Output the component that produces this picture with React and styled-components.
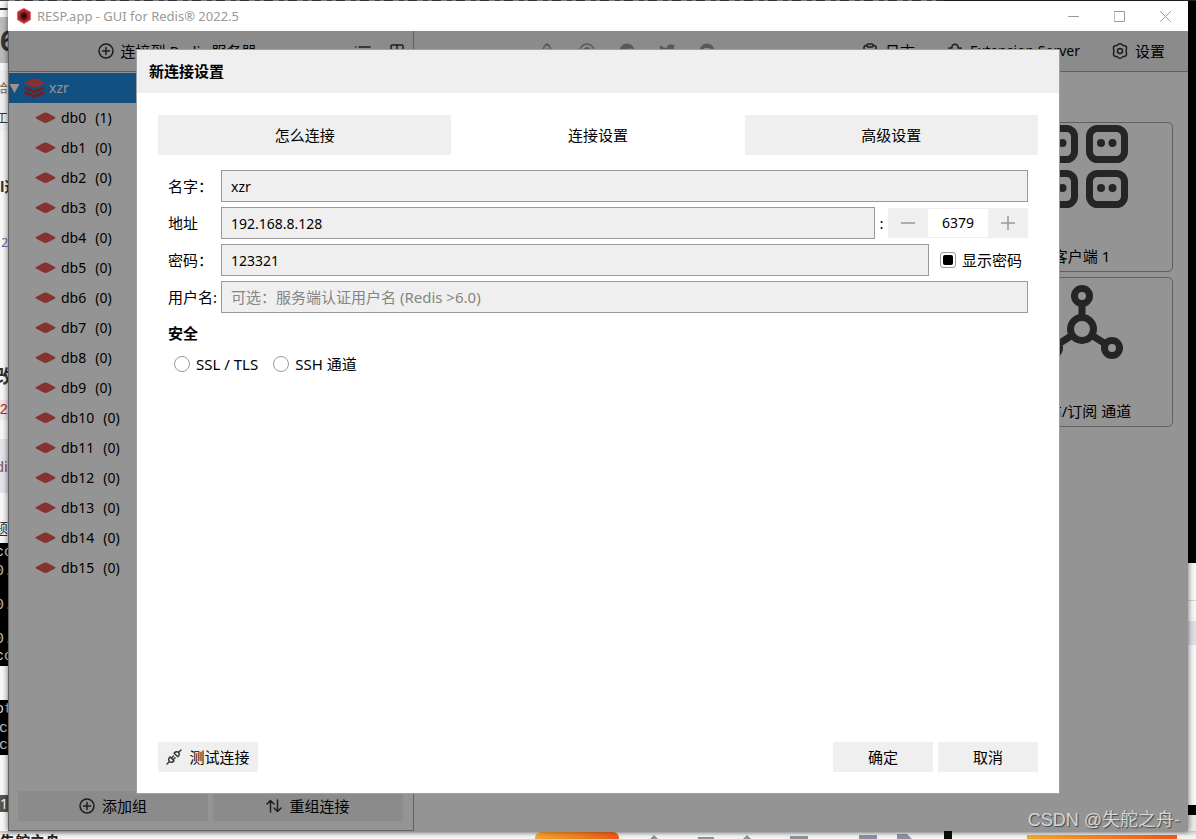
import React, { useState } from 'react';
import styled, { createGlobalStyle } from 'styled-components';

const GlobalStyle = createGlobalStyle`
  *, *::before, *::after { box-sizing: border-box; }
  body {
    margin: 0;
    overflow: hidden;
    background: #fbfbfb;
    color: #000;
    font: 15px/20px "Noto Sans", "Noto Sans CJK SC", sans-serif;
  }
  button, input { font: inherit; color: inherit; margin: 0; }
  button { border: 0; padding: 0; cursor: pointer; }
`;

/* ---------- desktop behind the window ---------- */
const Desktop = styled.div`
  display: grid;
  grid-template: 1px minmax(0, 1fr) 8px / 8px minmax(0, 1fr) 8px;
  height: 100vh;
  overflow: hidden;
  position: relative;
`;
const TopStrip = styled.div`
  grid-column: 1 / -1;
  display: flex;
  background: repeating-linear-gradient(90deg, #45454f 0 9px, #aaa 9px 15px, #55555f 15px 20px, #aaa 20px 24px);
  &::after { content: ''; width: 252px; margin-left: auto; background: #262626; }
`;
const SideStrip = styled.div`
  display: flex;
  flex-direction: column;
  overflow: hidden;
`;
const Patch = styled.div`
  flex: 0 0 ${p => p.$h}px;
  display: flex;
  align-items: center;
  justify-content: ${p => p.$align || 'flex-end'};
  overflow: hidden;
  white-space: nowrap;
  background: ${p => p.$bg || '#f8f8f8'};
  color: ${p => p.$fg || '#333'};
  font-family: ${p => (p.$mono ? '"Liberation Mono", monospace' : 'inherit')};
  font-size: ${p => p.$size || 15}px;
  font-weight: ${p => (p.$bold ? 700 : 400)};
`;
const BottomStrip = styled.div`
  grid-column: 1 / -1;
  display: flex;
  align-items: flex-start;
  overflow: hidden;
  background: linear-gradient(#c4c4c4, #f3f3f3 5px);
`;
const BottomText = styled.span`
  flex: 0 0 61px;
  font-size: 15px;
  font-weight: 700;
  color: #222;
  white-space: nowrap;
`;
const BottomArt = styled.svg`
  display: block;
  flex: 0 0 661px;
  margin-left: auto;
  height: 8px;
`;
const Watermark = styled.div`
  position: absolute;
  right: 16px;
  bottom: 6px;
  color: #d6d6d6;
  font: 18px/26px "Liberation Sans", "Noto Sans CJK SC", sans-serif;
  text-shadow: 1px 1px 1px #444;
`;

/* ---------- application window ---------- */
const Window = styled.main`
  position: relative;
  display: flex;
  flex-direction: column;
  min-width: 0;
  background: #fff;
  box-shadow: 0 0 6px rgba(0, 0, 0, 0.6);
`;
const TitleBar = styled.header`
  display: flex;
  align-items: center;
  flex: 0 0 30px;
  padding-left: 8px;
  gap: 5px;
  color: #999;
  font-size: 13px;
`;
const Caption = styled.span`flex: 1;`;
const WindowControls = styled.div`display: flex;`;
const WindowButton = styled.button`
  display: grid;
  place-items: center;
  width: 46px;
  height: 30px;
  background: none;
`;
const Workspace = styled.div`
  flex: 1;
  min-height: 0;
  display: grid;
  grid-template-columns: 406px minmax(0, 1fr);
`;
const Sidebar = styled.aside`
  display: flex;
  flex-direction: column;
  border: 1px solid #a5a5a5;
  border-top: 0;
`;
const ToolBar = styled.div`
  display: flex;
  align-items: center;
  flex: 0 0 41px;
  background: #f0f0f0;
  border-bottom: 1px solid #a5a5a5;
`;
const ToolButton = styled.button`
  display: flex;
  align-items: center;
  justify-content: center;
  gap: 7px;
  height: 40px;
  background: #f0f0f0;
  white-space: nowrap;
  flex: ${p => (p.$grow ? 1 : '0 0 auto')};
  padding: 0 ${p => p.$pad || 0}px;
  font-size: ${p => (p.$latin ? 14 : 15)}px;
`;
const Socials = styled.nav`
  display: flex;
  gap: 24px;
  margin-left: 125px;
`;
const Social = styled.a`
  display: flex;
  color: #999;
`;
const Actions = styled.div`
  display: flex;
  gap: 32px;
  margin-left: auto;
  padding-right: 23px;
`;
const Tree = styled.ul`
  flex: 1;
  list-style: none;
  margin: 1px 0 0;
  padding: 0;
  font-size: 14px;
`;
const ServerRow = styled.li`
  display: flex;
  align-items: center;
  height: 30px;
  gap: 4px;
  background: #228ae0;
  color: #fff;
`;
const DbRow = styled.li`
  display: flex;
  align-items: center;
  height: 30px;
  gap: 5px;
  padding-left: 26px;
`;
const Count = styled.span`margin-left: 4px;`;
const SidebarFooter = styled.div`
  display: grid;
  grid-template-columns: 1fr 1fr;
  gap: 5px;
  padding: 0 10px 9px 9px;
`;
const FooterButton = styled(ToolButton)`height: 30px;`;
const Content = styled.section`
  display: flex;
  flex-direction: column;
  min-width: 0;
`;
const Cards = styled.div`
  display: grid;
  grid-template-columns: repeat(4, minmax(0, 1fr));
  gap: 5px;
  padding: 50px 15px 0 12px;
`;
const Card = styled.article`
  grid-column: 4;
  height: 150px;
  display: flex;
  flex-direction: column;
  align-items: center;
  justify-content: space-between;
  padding: 2px 0 5px;
  border: 1px solid #a5a5a5;
  border-radius: 5px;
`;

/* ---------- dialog ---------- */
const Overlay = styled.div`
  position: absolute;
  inset: 30px 0 0;
  display: flex;
  padding: 19px 129px 38px;
  background: rgba(0, 0, 0, 0.42);
`;
const Dialog = styled.form`
  flex: 1;
  display: flex;
  flex-direction: column;
  background: #fff;
  outline: 1px solid #a0a0a0;
`;
const DialogTitle = styled.h1`
  margin: 0;
  padding: 11px 12px 12px;
  background: #efefef;
  font-size: 15px;
  line-height: 20px;
`;
const DialogBody = styled.div`
  flex: 1;
  display: flex;
  flex-direction: column;
  padding: 22px 21px 21px;
`;
const Tabs = styled.div`
  display: grid;
  grid-template-columns: repeat(3, 1fr);
`;
const Tab = styled.button`
  height: 40px;
  background: ${p => (p.$active ? '#fff' : '#efefef')};
`;
const Fields = styled.div`
  display: flex;
  flex-direction: column;
  gap: 5px;
  padding: 15px 10px 0;
`;
const Field = styled.div`
  display: flex;
  align-items: center;
  height: 32px;
`;
const Label = styled.label`
  flex: 0 0 53px;
  white-space: nowrap;
`;
const TextInput = styled.input`
  flex: 1;
  min-width: 0;
  height: 32px;
  padding: 0 9px;
  border: 1px solid #999;
  border-radius: 0;
  background: #efefef;
  font-size: 14px;
  outline: 0;
  &::placeholder { color: #858585; opacity: 1; font-size: 15px; }
`;
const Colon = styled.span`
  flex: 0 0 13px;
  text-align: center;
`;
const Stepper = styled.div`
  flex: 0 0 140px;
  display: grid;
  grid-template-columns: 40px 1fr 40px;
  height: 30px;
  border: solid #efefef;
  border-width: 1px 0;
`;
const StepButton = styled.button`
  display: grid;
  place-items: center;
  background: #efefef;
`;
const PortInput = styled.input`
  width: 100%;
  min-width: 0;
  border: 0;
  padding: 0;
  background: #fff;
  text-align: center;
  font-size: 14px;
  outline: 0;
`;
const Choice = styled.label`
  display: flex;
  align-items: center;
  gap: 6px;
  white-space: nowrap;
`;
const ShowPassword = styled(Choice)`
  flex: 0 0 99px;
  padding-left: 11px;
`;
const Check = styled.input`
  appearance: none;
  width: 16px;
  height: 16px;
  display: grid;
  place-items: center;
  border: 1px solid #999;
  border-radius: 3px;
  background: #fff;
  &:checked::before { content: ''; width: 10px; height: 10px; border-radius: 2px; background: #000; }
`;
const Radio = styled(Check)`
  border-radius: 50%;
  &:checked::before { border-radius: 50%; }
`;
const SectionTitle = styled.h2`
  margin: 5px 0 6px;
  font-size: 15px;
  line-height: 20px;
`;
const Choices = styled.div`
  display: flex;
  gap: 15px;
  padding-left: 6px;
`;
const DialogFooter = styled.footer`
  display: flex;
  gap: 5px;
  margin-top: auto;
`;
const DialogButton = styled.button`
  display: flex;
  align-items: center;
  justify-content: center;
  gap: 7px;
  width: 100px;
  height: 30px;
  background: #efefef;
  margin-right: ${p => (p.$lead ? 'auto' : 0)};
`;

/* ---------- icons ---------- */
const Icon = ({ size = 16, w, h, box = '0 0 16 16', sw = 1.5, color = '#333', children }) => (
  <svg width={w || size} height={h || size} viewBox={box} fill="none" stroke={color} strokeWidth={sw} strokeLinecap="round" strokeLinejoin="round" aria-hidden="true">
    {children}
  </svg>
);
const PlusCircle = () => <Icon><circle cx="8" cy="8" r="7" /><path d="M4.5 8h7M8 4.5v7" /></Icon>;
const AppLogo = () => (
  <Icon box="0 0 16 18" w={16} h={16}>
    <path d="M8 .5 15.2 4.6v8.6L8 17.5.8 13.2V4.6Z" fill="#b5272d" stroke="#cf4a49" strokeWidth=".8" />
    <path d="M8 4 12 6.5v5L8 14 4 11.5v-5Z" fill="#5c0f14" stroke="none" />
    <circle cx="8" cy="9" r="2" fill="#210507" stroke="none" />
  </Icon>
);
const ServerIcon = () => (
  <Icon w={21} h={20} box="0 0 21 20" sw={3}>
    <path d="M8.5.8q2-.8 4 0L20 4.2q1 .8 0 1.500L12.500 9.200q-2 .8-4 0L1 5.700q-1-.7 0-1.500Z" fill="#e55653" stroke="none" />
    <path d="m1.8 10 6.700 3q2 .8 4 0l6.700-3M1.800 14.800l6.700 3q2 .8 4 0l6.700-3" stroke="#bb3b3e" />
  </Icon>
);
const DbIcon = () => (
  <Icon w={21} h={12} box="0 0 21 12"><path d="M8.5.9q2-.8 4 0L20 5q1 .8 0 1.500l-7.500 4q-2 .8-4 0L1 6.500q-1-.7 0-1.500Z" fill="#e55653" stroke="none" /></Icon>
);
const ClientIcon = () => (
  <Icon w={92} h={84} box="0 0 92 84" sw={7}>
    <g stroke="#404040">
      {[[0, 0], [50, 0], [0, 45], [50, 45]].map(([x, y]) => (
        <g key={`${x}-${y}`} transform={`translate(${x} ${y})`}>
          <rect x="3.5" y="3.5" width="35" height="31" rx="8" />
          <g fill="#404040" stroke="none"><circle cx="15" cy="18" r="4" /><circle cx="26.5" cy="18" r="4" /></g>
        </g>
      ))}
    </g>
  </Icon>
);
const ChannelIcon = () => (
  <Icon w={84} h={84} box="0 0 84 84" sw={7}>
    <g stroke="#404040">
      <circle cx="42" cy="49" r="11.5" /><circle cx="42" cy="16" r="7.5" />
      <circle cx="12" cy="68" r="7.5" /><circle cx="72" cy="68" r="7.5" />
      <path d="M42 25v10M31 56l-11 7M53 56l11 7" strokeLinecap="butt" />
    </g>
  </Icon>
);
const Plug = () => (
  <Icon sw={1.4}>
    <path d="m1 15 2.5-2.5M12.5 3.5 15 1M3.5 12.5c-1.3-1.6-1-3.2.7-4.6L8 11.7c-1.4 1.7-3 2.1-4.5.8ZM8.100 4.300c1.300-1.700 3-2.100 4.400-.8 1.300 1.500 1 3-.7 4.300ZM6 8.600l1.500-1.500M7.600 10.200l1.500-1.500" />
  </Icon>
);

const leftPatches = [
  [16, '#f8f8f8', '一', { $bold: true }], [46, '#bcbcbc', '6', { $size: 28, $bold: true, $align: 'flex-start' }], [7, '#f8f8f8'],
  [37, '#f1f1f1', '给', { $fg: '#765', $size: 12 }], [24, '#f1f1f1', '工', { $size: 12 }], [38, '#f8f8f8'],
  [34, '#f8f8f8', 'l道', { $bold: true, $align: 'flex-start' }],
  [26, '#f8f8f8'], [28, '#f8f8f8', '2', { $fg: '#66a', $size: 12 }], [108, '#f8f8f8'], [22, '#f8f8f8', '改', { $size: 18, $bold: true, $align: 'center' }],
  [13, '#f8f8f8'], [20, '#f3e7e9', '12', { $fg: '#b22', $mono: true, $size: 14 }], [19, '#f8f8f8'],
  [54, '#e4e4ea', 'di', { $fg: '#8a5055' }], [24, '#f8f8f8'], [22, '#f8f8f8', '题'], [4, '#f8f8f8'],
  [20, '#000', 'co', { $mono: true, $fg: '#ccc', $align: 'center' }], [17, '#000', '0.', { $mono: true, $fg: '#bbb', $align: 'center' }], [17, '#000'],
  [17, '#000', '0.', { $mono: true, $fg: '#bbb', $align: 'center' }], [17, '#000'], [17, '#000', '0.', { $mono: true, $fg: '#bbb', $align: 'center' }],
  [18, '#000', 'co', { $mono: true, $fg: '#ccc', $align: 'center' }], [34, '#f8f8f8'],
  [20, '#000', 'ot', { $mono: true, $fg: '#ccc', $align: 'center' }], [17, '#000', '.c', { $mono: true, $fg: '#bbb' }], [18, '#000', 'c', { $mono: true, $fg: '#bbb' }],
  [40, '#f8f8f8'], [17, '#555', '1', { $fg: '#fff', $size: 14 }], [19, '#f8f8f8'],
];
const rightPatches = [[562, '#000'], [37, '#f7f7f7'], [1, '#d5d5da'], [20, '#f7f7f7'], [24, '#dfdfe6'], [160, '#f7f7f7'], [10, '#000'], [17, '#e8e8e8']];
const databases = Array.from({ length: 16 }, (_, i) => ({ name: `db${i}`, keys: i === 0 ? 1 : 0 }));
const tabNames = ['怎么连接', '连接设置', '高级设置'];

export default function App() {
  const [tab, setTab] = useState(1);
  const [port, setPort] = useState(6379);
  const [visible, setVisible] = useState(true);

  return (
    <>
      <GlobalStyle />
      <Desktop>
        <TopStrip />
        <SideStrip aria-hidden="true">
          {leftPatches.map(([h, bg, text, style], i) => <Patch key={i} $h={h} $bg={bg} {...style}>{text}</Patch>)}
        </SideStrip>

        <Window>
          <TitleBar>
            <AppLogo />
            <Caption>RESP.app - GUI for Redis® 2022.5</Caption>
            <WindowControls>
              <WindowButton aria-label="最小化"><Icon color="#999" size={11} box="0 0 11 11" sw={1}><path d="M.5 5.5h10" /></Icon></WindowButton>
              <WindowButton aria-label="最大化"><Icon color="#999" size={11} box="0 0 11 11" sw={1}><path d="M.5.5h10v10H.5Z" /></Icon></WindowButton>
              <WindowButton aria-label="关闭"><Icon color="#999" size={11} box="0 0 11 11" sw={1}><path d="m.5.5 10 10M10.5.5l-10 10" /></Icon></WindowButton>
            </WindowControls>
          </TitleBar>

          <Workspace>
            <Sidebar>
              <ToolBar>
                <ToolButton $grow>
                  <PlusCircle />连接到 Redis 服务器
                </ToolButton>
                <ToolButton $pad={10} aria-label="列表">
                  <Icon><path d="M4 4h11M4 8h11M4 12h11M.5 4h.2M.5 8h.2M.5 12h.2" /></Icon>
                </ToolButton>
                <ToolButton $pad={8} aria-label="布局">
                  <Icon><rect x="2" y="2" width="12" height="12" rx="1" /><path d="M8 2v12M2 8h12" /></Icon>
                </ToolButton>
              </ToolBar>
              <Tree>
                <ServerRow>
                  <Icon w={11} h={10} box="0 0 11 10"><path d="M.5 1h10L5.5 10Z" fill="#fff" stroke="none" /></Icon>
                  <ServerIcon />xzr
                </ServerRow>
                {databases.map(db => (
                  <DbRow key={db.name}><DbIcon />{db.name} <Count>({db.keys})</Count></DbRow>
                ))}
              </Tree>
              <SidebarFooter>
                <FooterButton><PlusCircle />添加组</FooterButton>
                <FooterButton>
                  <Icon><path d="M4.5 14V2.5M1 6l3.5-3.5L8 6M11.5 2v11.5M8 10l3.5 3.5L15 10" /></Icon>重组连接
                </FooterButton>
              </SidebarFooter>
            </Sidebar>

            <Content>
              <ToolBar>
                <Socials>
                  <Social href="#start" aria-label="Start"><Icon color="#999"><path d="M4 9c0-4 2-7 4-8 2 1 4 4 4 8v4H4ZM8 6v.1" /></Icon></Social>
                  <Social href="#github" aria-label="GitHub"><Icon color="#999"><circle cx="8" cy="8" r="7" /><circle cx="8" cy="8" r="3" /></Icon></Social>
                  <Social href="#telegram" aria-label="Telegram"><Icon><circle cx="8" cy="8" r="7.5" fill="currentColor" stroke="none" /><path d="m4 8 8-3-2 7-2-3Z" fill="#f0f0f0" stroke="none" /></Icon></Social>
                  <Social href="#twitter" aria-label="Twitter"><Icon><path d="M1 2c2 2 4 3 7 3 0-3 3-5 5.5-3L16 1.5 15 4c0 7-6 12-14 9 2 0 3-.5 4-1.5C2 9 0 6 1 2Z" fill="currentColor" stroke="none" /></Icon></Social>
                  <Social href="#news" aria-label="News"><Icon><circle cx="8" cy="8" r="7.5" fill="currentColor" stroke="none" /><path d="M5 5h6v5H5Z" fill="#f0f0f0" stroke="none" /></Icon></Social>
                </Socials>
                <Actions>
                  <ToolButton><Icon><rect x="2" y="2.5" width="12" height="13" rx="2" /><rect x="5" y="1" width="6" height="3" rx="1" fill="#f0f0f0" /><path d="M5 8h6M5 11h6" /></Icon>日志</ToolButton>
                  <ToolButton $latin><Icon><path d="M2 5h3c-1-5 7-5 6 0h3v9H2Z" /></Icon>Extension Server</ToolButton>
                  <ToolButton>
                    <Icon><path d="M6 1.5Q8 0 10 1.5l1 1 2 .2q2 .8 1.5 3L14 8l.5 2.3q.5 2.2-1.5 3l-2 .2-1 1Q8 16 6 14.5l-1-1-2-.2q-2-.8-1.5-3L2 8l-.5-2.3q-.5-2.200 1.500-3l2-.2Z" /><circle cx="8" cy="8" r="2.5" /></Icon>设置
                  </ToolButton>
                </Actions>
              </ToolBar>
              <Cards>
                <Card><ClientIcon />客户端 1</Card>
                <Card><ChannelIcon />发布/订阅 通道</Card>
              </Cards>
            </Content>
          </Workspace>

          <Overlay>
            <Dialog role="dialog" aria-labelledby="dialog-title" onSubmit={e => e.preventDefault()}>
              <DialogTitle id="dialog-title">新连接设置</DialogTitle>
              <DialogBody>
                <Tabs role="tablist">
                  {tabNames.map((name, i) => (
                    <Tab key={name} type="button" role="tab" aria-selected={tab === i} $active={tab === i} onClick={() => setTab(i)}>{name}</Tab>
                  ))}
                </Tabs>
                <Fields>
                  <Field>
                    <Label htmlFor="name">名字：</Label>
                    <TextInput id="name" defaultValue="xzr" />
                  </Field>
                  <Field>
                    <Label htmlFor="host">地址</Label>
                    <TextInput id="host" defaultValue="192.168.8.128" />
                    <Colon>:</Colon>
                    <Stepper>
                      <StepButton type="button" aria-label="减少" onClick={() => setPort(port - 1)}><Icon color="#999"><path d="M1 8h14" strokeLinecap="butt" /></Icon></StepButton>
                      <PortInput aria-label="端口" value={port} onChange={e => setPort(Number(e.target.value) || 0)} />
                      <StepButton type="button" aria-label="增加" onClick={() => setPort(port + 1)}><Icon color="#999"><path d="M1 8h14M8 1v14" strokeLinecap="butt" /></Icon></StepButton>
                    </Stepper>
                  </Field>
                  <Field>
                    <Label htmlFor="password">密码：</Label>
                    <TextInput id="password" type={visible ? 'text' : 'password'} defaultValue="123321" />
                    <ShowPassword>
                      <Check type="checkbox" checked={visible} onChange={() => setVisible(!visible)} />显示密码
                    </ShowPassword>
                  </Field>
                  <Field>
                    <Label htmlFor="user">用户名:</Label>
                    <TextInput id="user" placeholder="可选：服务端认证用户名 (Redis >6.0)" />
                  </Field>
                  <SectionTitle>安全</SectionTitle>
                  <Choices>
                    <Choice><Radio type="radio" name="security" />SSL / TLS</Choice>
                    <Choice><Radio type="radio" name="security" />SSH 通道</Choice>
                  </Choices>
                </Fields>
                <DialogFooter>
                  <DialogButton type="button" $lead><Plug />测试连接</DialogButton>
                  <DialogButton type="submit">确定</DialogButton>
                  <DialogButton type="button">取消</DialogButton>
                </DialogFooter>
              </DialogBody>
            </Dialog>
          </Overlay>
        </Window>

        <SideStrip aria-hidden="true">
          {rightPatches.map(([h, bg], i) => <Patch key={i} $h={h} $bg={bg} />)}
        </SideStrip>
        <BottomStrip aria-hidden="true">
          <BottomText>失舵之舟</BottomText>
          <BottomArt viewBox="0 0 661 8">
            <defs>
              <linearGradient id="banner"><stop offset="0" stopColor="#f7a52c" /><stop offset="1" stopColor="#ef5a16" /></linearGradient>
            </defs>
            <rect y="1" width="84" height="14" rx="6" fill="url(#banner)" />
            <path d="M115 8l4-4 4 4ZM163 6h16v2h-16ZM208 8l4-4 4 4ZM255 5h18v3h-18ZM324 4h18v4h-18ZM362 3h10l5 5h-15Z" fill="#8f8fa0" />
            <rect x="409" width="8" height="8" fill="#061006" />
            <rect x="492" y="4" width="150" height="4" fill="url(#banner)" />
          </BottomArt>
        </BottomStrip>
        <Watermark>CSDN @失舵之舟-</Watermark>
      </Desktop>
    </>
  );
}
